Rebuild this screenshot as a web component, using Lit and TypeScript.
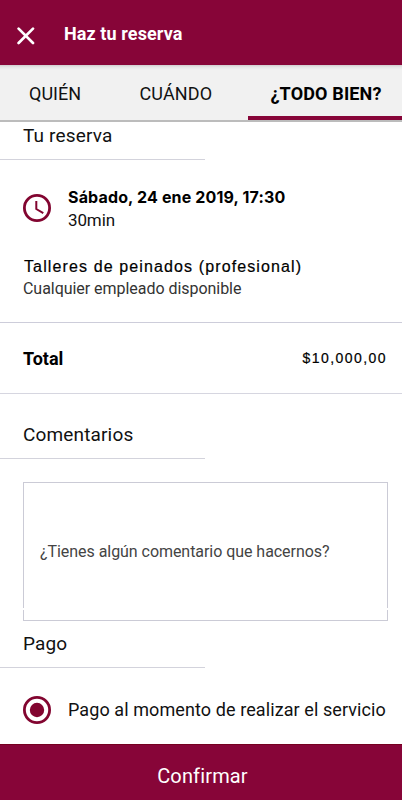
import { LitElement, html, css } from "lit";
import { customElement } from "lit/decorators.js";

@customElement("app-root")
export class AppRoot extends LitElement {
  static styles = css`
    :host { display: flex; flex-direction: column; height: 800px; width: 402px; box-sizing: border-box; background: #fff; color: #111; font-family: Roboto, sans-serif; overflow: hidden; white-space: nowrap; }
    * { box-sizing: border-box; }
    header { flex: none; height: 65px; background: #870538; color: #fff; display: flex; align-items: center; padding: 6px 0 0 17px; gap: 29px; }
    header svg { display: block; width: 18px; height: 18px; }
    .title { margin: 0; font-size: 18px; line-height: 24px; font-weight: 700; letter-spacing: 0.1px; padding-bottom: 4px; }
    nav { flex: none; height: 57px; background: linear-gradient(#cfcccd 0, #e5e5e5 2px, #f1f1f1 5px); border-bottom: 2px solid #bcbcbc; display: flex; font-size: 18px; }
    .tab { height: 55px; line-height: 57px; }
    .who { width: 139.5px; padding-left: 29px; }
    .when { width: 108.5px; letter-spacing: 0.12px; }
    .active { width: 154px; padding-left: 22.5px; font-weight: 700; letter-spacing: 0.15px; color: #000; border-bottom: 4px solid #870538; }
    .heading { flex: none; margin: 0; width: 205px; padding-left: 23px; border-bottom: 1px solid #d3d3dc; font-size: 19px; letter-spacing: 0.15px; font-weight: 400; }
    .first { height: 38px; line-height: 27px; }
    .comments { height: 65px; line-height: 82px; }
    .payment { height: 47px; line-height: 45px; }
    .booking { flex: none; height: 163px; padding: 26px 0 0 23px; border-bottom: 1px solid #cdcdda; }
    .time { display: flex; gap: 17px; height: 47px; }
    .icon { display: block; flex: none; width: 28px; height: 28px; }
    .time .icon { margin-top: 8px; }
    .date { font: 700 16px/22px Inter, sans-serif; letter-spacing: 0.15px; color: #000; }
    .duration { font-size: 17px; line-height: 24px; letter-spacing: -0.12px; }
    .service { margin: 23px 0 0 1px; font: 16px/22px "Liberation Sans", sans-serif; letter-spacing: 1.12px; color: #000; -webkit-text-stroke: 0.2px #000; }
    .staff { font-size: 16px; line-height: 22px; letter-spacing: -0.04px; color: #333; }
    .total { flex: none; height: 71px; display: flex; align-items: center; justify-content: space-between; padding: 0 15px 0 23px; border-bottom: 1px solid #d6d6e0; color: #000; font-size: 18px; font-weight: 700; }
    .price { font: 14px "Liberation Sans", sans-serif; letter-spacing: 1.45px; -webkit-text-stroke: 0.2px #000; }
    .comment { flex: none; margin: 23px 14px 0 23px; height: 139px; border: 1px solid #cbcbd6; padding-left: 16px; line-height: 137px; font-size: 16px; letter-spacing: -0.05px; color: #444; position: relative; }
    .comment::after { content: ""; position: absolute; left: -1px; right: -1px; bottom: 10px; height: 2px; background: #fff; }
    .option { flex: 1; display: flex; align-items: center; padding: 8px 0 0 23px; gap: 17px; font-size: 18px; letter-spacing: 0.09px; }
    .option span { padding-bottom: 1px; }
    footer { flex: none; height: 56px; background: #870538; border-top: 1px solid #750020; color: #fff; text-align: center; line-height: 62px; font-size: 20px; letter-spacing: 0.15px; padding-left: 3px; }
  `;
  render() {
    return html`
      <header>
        <svg viewBox="0 0 18 18" fill="none" stroke="#fff" stroke-width="2.7" stroke-linecap="round"><path d="M1.6 1.6 16 16M16 1.6 1.6 16" /></svg>
        <h1 class="title">Haz tu reserva</h1>
      </header>
      <nav>
        <div class="tab who">QUIÉN</div>
        <div class="tab when">CUÁNDO</div>
        <div class="tab active">¿TODO BIEN?</div>
      </nav>
      <h2 class="heading first">Tu reserva</h2>
      <section class="booking">
        <div class="time">
          <svg class="icon" viewBox="0 0 28 28" fill="none" stroke="#820530"><circle cx="14" cy="14" r="12.6" stroke-width="2.8" /><path d="M13.3 7v8l7 4.1" stroke-width="2" /></svg>
          <div>
            <div class="date">Sábado, 24 ene 2019, 17:30</div>
            <div class="duration">30min</div>
          </div>
        </div>
        <div class="service">Talleres de peinados (profesional)</div>
        <div class="staff">Cualquier empleado disponible</div>
      </section>
      <section class="total"><span>Total</span><span class="price">$10,000,00</span></section>
      <h2 class="heading comments">Comentarios</h2>
      <div class="comment">¿Tienes algún comentario que hacernos?</div>
      <h2 class="heading payment">Pago</h2>
      <div class="option">
        <svg class="icon" viewBox="0 0 28 28"><circle cx="14" cy="14" r="12.6" fill="none" stroke="#820530" stroke-width="2.8" /><circle cx="14" cy="14" r="7.2" fill="#820530" /></svg>
        <span>Pago al momento de realizar el servicio</span>
      </div>
      <footer>Confirmar</footer>
    `;
  }
}
